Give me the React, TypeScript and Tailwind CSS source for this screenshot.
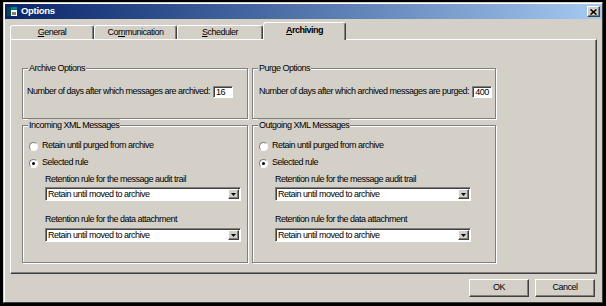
const raised =
  "border border-t-white border-l-white border-r-[#404040] border-b-[#404040] shadow-[inset_-1px_-1px_0_#808080]";
const sunken =
  "border border-t-[#808080] border-l-[#808080] border-r-white border-b-white shadow-[inset_1px_1px_0_#404040]";

function Radio({ checked, label }: { checked?: boolean; label: string }) {
  return (
    <div className="flex items-center h-[12px] gap-[4px]">
      <div className="w-[9px] h-[9px] rounded-full bg-white border border-t-[#808080] border-l-[#808080] border-r-white border-b-white flex items-center justify-center">
        {checked && <div className="w-[3px] h-[3px] rounded-full bg-black" />}
      </div>
      <span>{label}</span>
    </div>
  );
}

function Select({ value }: { value: string }) {
  return (
    <div className={`h-[14px] w-[196px] bg-white flex items-stretch ${sunken}`}>
      <div className="flex-1 flex items-center pl-[2px] pt-[1px] leading-none">{value}</div>
      <div className={`w-[11px] mt-[1px] mb-px mr-px bg-[#d4d0c8] flex items-center justify-center ${raised}`}>
        <svg width="5" height="3" viewBox="0 0 5 3">
          <polygon points="0,0 5,0 2.5,3" fill="#000" />
        </svg>
      </div>
    </div>
  );
}

function NumberBox({ value }: { value: string }) {
  return (
    <div className={`w-[20px] h-[12px] bg-white flex items-center pl-[2px] leading-none ${sunken}`}>
      {value}
    </div>
  );
}

function Legend({ children }: { children: string }) {
  return <legend className="ml-[5px] px-px leading-[12px] bg-[#d4d0c8]">{children}</legend>;
}

const group = "border border-[#808080] shadow-[inset_1px_1px_0_#fff,1px_1px_0_#fff]";

function XmlGroup({ title }: { title: string }) {
  return (
    <fieldset className={group}>
      <Legend>{title}</Legend>
      <div className="h-[131px] pt-[9px] pl-[6px] flex flex-col">
        <Radio label="Retain until purged from archive" />
        <div className="mt-[5px]">
          <Radio checked label="Selected rule" />
        </div>
        <div className="pl-[16px] flex flex-col">
          <div className="mt-[5px] h-[12px] flex items-center">Retention rule for the message audit trail</div>
          <div className="mt-px">
            <Select value="Retain until moved to archive" />
          </div>
          <div className="mt-[13px] h-[12px] flex items-center">Retention rule for the data attachment</div>
          <div className="mt-[2px]">
            <Select value="Retain until moved to archive" />
          </div>
        </div>
      </div>
    </fieldset>
  );
}

export default function App() {
  return (
    <div className="w-[606px] h-[306px] bg-black pt-[2px] px-[3px] pb-[3px] font-['Liberation_Sans',Arial,sans-serif] text-[9px] tracking-[-0.5px] text-black">
      <div className="w-full h-full bg-[#d4d0c8] border border-t-[#d4d0c8] border-l-[#d4d0c8] border-r-[#404040] border-b-[#404040] shadow-[inset_1px_1px_0_#fff] pt-px pl-px flex flex-col">
        {/* title bar */}
        <div className="h-[15px] bg-linear-to-r from-[#0a246a] to-[#a6caf0] flex items-center pl-[2px] pr-[2px]">
          <svg width="10" height="9" viewBox="0 0 10 9" className="mr-[4px]">
            <rect x="0" y="0" width="10" height="9" fill="#fff" />
            <rect x="0" y="0" width="10" height="3" fill="#008080" />
            <rect x="0" y="0" width="4" height="9" fill="#004c4c" />
            <rect x="5" y="5" width="4" height="3" fill="#808080" />
          </svg>
          <span className="text-white font-bold text-[9.5px] tracking-[-0.3px]">Options</span>
          <div className={`ml-auto w-[13px] h-[11px] bg-[#d4d0c8] flex items-center justify-center ${raised}`}>
            <svg width="7" height="6" viewBox="0 0 7 6">
              <path d="M0.5 0.5 L6.5 5.5 M6.5 0.5 L0.5 5.5" stroke="#000" strokeWidth="1.6" />
            </svg>
          </div>
        </div>

        {/* tabs */}
        <div className="mt-[3px] ml-[5px] h-[17px] flex items-end">
          <div className="h-[14px] w-[84px] border-l border-t border-r border-l-white border-t-white border-r-[#404040] rounded-t-[3px] shadow-[inset_-1px_0_0_#808080] flex items-center justify-center">
            <span><span className="underline">G</span>eneral</span>
          </div>
          <div className="h-[14px] w-[83px] border-l border-t border-r border-l-white border-t-white border-r-[#404040] rounded-t-[3px] shadow-[inset_-1px_0_0_#808080] flex items-center justify-center">
            <span>Co<span className="underline">m</span>munication</span>
          </div>
          <div className="h-[14px] w-[86px] border-l border-t border-r border-l-white border-t-white border-r-[#404040] rounded-t-[3px] shadow-[inset_-1px_0_0_#808080] flex items-center justify-center">
            <span><span className="underline">S</span>cheduler</span>
          </div>
          <div className="relative z-10 -mb-px h-[18px] w-[83px] bg-[#d4d0c8] border-l border-t border-r border-l-white border-t-white border-r-[#404040] rounded-t-[3px] shadow-[inset_-1px_0_0_#808080] flex items-center justify-center pb-[2px] font-bold">
            <span><span className="underline">A</span>rchiving</span>
          </div>
        </div>

        {/* panel */}
        <div className={`ml-[5px] w-[587px] h-[235px] ${raised} pl-[11px] pt-[22px]`}>
          <div className="flex gap-[4px]">
            <div className="w-[226px] flex flex-col">
              <fieldset className={group}>
                <Legend>Archive Options</Legend>
                <div className="h-[44px] pt-[12px] pl-[4px]">
                  <div className="flex items-center gap-[3px] h-[12px]">
                    <span>Number of days after which messages are archived:</span>
                    <NumberBox value="16" />
                  </div>
                </div>
              </fieldset>
              <XmlGroup title="Incoming XML Messages" />
            </div>
            <div className="w-[244px] flex flex-col">
              <fieldset className={group}>
                <Legend>Purge Options</Legend>
                <div className="h-[44px] pt-[12px] pl-[6px]">
                  <div className="flex items-center gap-[3px] h-[12px]">
                    <span>Number of days after which archived messages are purged:</span>
                    <NumberBox value="400" />
                  </div>
                </div>
              </fieldset>
              <XmlGroup title="Outgoing XML Messages" />
            </div>
          </div>
        </div>

        {/* buttons */}
        <div className="mt-[5px] pr-[7px] flex justify-end gap-[6px]">
          <button className={`w-[60px] h-[18px] bg-[#d4d0c8] flex items-center justify-center ${raised}`}>OK</button>
          <button className={`w-[60px] h-[18px] bg-[#d4d0c8] flex items-center justify-center ${raised}`}>Cancel</button>
        </div>
      </div>
    </div>
  );
}
